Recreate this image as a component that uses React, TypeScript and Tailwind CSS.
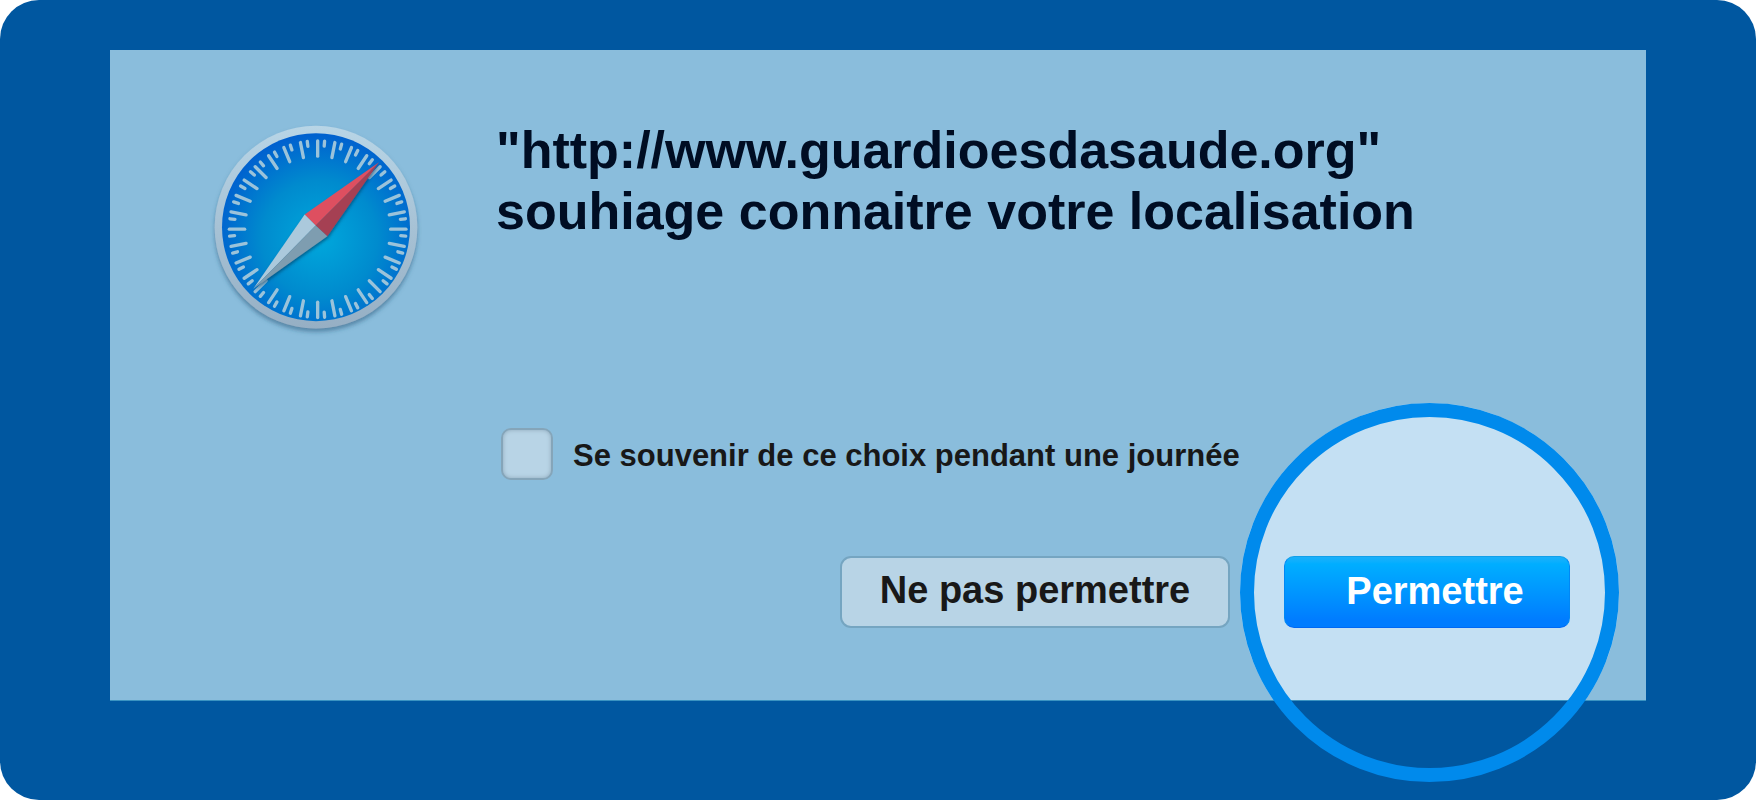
const STEP = 11.25;

function Compass() {
  const ticks = Array.from({ length: 32 }, (_, i) => -45 + i * STEP);
  return (
    <svg viewBox="30 30 636 656" className="h-[219px] w-[212px] shrink-0" role="img" aria-label="Safari">
      <defs>
        <linearGradient id="rim" x1="0" y1="0" x2="0" y2="1">
          <stop offset="0" stopColor="#b8d5e6" />
          <stop offset="1" stopColor="#96afc4" />
        </linearGradient>
        <radialGradient id="dial" cx="0.52" cy="0.56" r="0.56">
          <stop offset="0" stopColor="#00a8dc" />
          <stop offset="0.55" stopColor="#008bce" />
          <stop offset="1" stopColor="#0060cf" />
        </radialGradient>
        <filter id="drop" x="-10%" y="-10%" width="120%" height="125%">
          <feDropShadow dx="0" dy="10" stdDeviation="6" floodColor="#234f70" floodOpacity="0.5" />
        </filter>
        <filter id="needleDrop" x="-10%" y="-10%" width="125%" height="125%">
          <feDropShadow dx="2" dy="6" stdDeviation="5" floodColor="#00385f" floodOpacity="0.6" />
        </filter>
      </defs>
      <circle cx="348" cy="351" r="304" fill="url(#rim)" filter="url(#drop)" />
      <circle cx="348" cy="351" r="282" fill="url(#dial)" />
      <g stroke="#9bc3da" strokeLinecap="round" strokeWidth="10">
        {ticks.map((a, i) => (
          <g key={a}>
            <path d="M353 92V138" transform={`rotate(${a} 353 357)`} />
            <path d="M353 92V107" transform={`rotate(${i < 16 ? a + 4.5 : a + STEP - 4.5} 353 357)`} />
          </g>
        ))}
      </g>
      <g filter="url(#needleDrop)">
        <path d="M537 156L314 313L347 346Z" fill="#de4f60" />
        <path d="M537 156L382 378L347 346Z" fill="#a54052" />
        <path d="M160 536L314 313L347 346Z" fill="#abc9dc" />
        <path d="M160 536L382 378L347 346Z" fill="#7e9db0" />
      </g>
    </svg>
  );
}

export default function App() {
  return (
    <div className="bg-white">
      <main className="flex min-h-screen flex-col rounded-[39px] bg-[#0057a0] px-[110px] pt-[50px] pb-[99px] font-['Liberation_Sans',Arial,sans-serif] font-bold">
        <section className="relative flex grow items-start gap-[74px] border-b border-[#3a93c1] bg-[#8abddc] pt-[70px] pr-[76px] pb-[72px] pl-[100px]">
          <div className="pointer-events-none absolute inset-0 overflow-hidden">
            <div className="absolute right-[27px] -bottom-[82px] size-[379px] rounded-full bg-[#c4e0f3]" />
          </div>
          <div className="pointer-events-none absolute right-[27px] -bottom-[82px] size-[379px] rounded-full border-[14px] border-[#008aec]" />
          <Compass />
          <form className="relative grow" onSubmit={(e) => e.preventDefault()}>
            <h1 className="text-[52px] leading-[61px] text-[#000d23]">
              "http://www.guardioesdasaude.org"
              <br />
              souhiage connaitre votre localisation
            </h1>
            <div className="mt-[186px] flex items-center gap-5 pl-[5px]">
              <input
                id="remember"
                type="checkbox"
                className="size-[52px] appearance-none rounded-[10px] border-2 border-[#85a5b9] bg-[#b8d4e6] shadow-[inset_0_0_4px_#8fa9ba] checked:bg-[#008aec]"
              />
              <label htmlFor="remember" className="pt-1 text-[31px] leading-9 text-[#181818]">
                Se souvenir de ce choix pendant une journée
              </label>
            </div>
            <div className="mt-[76px] flex justify-end gap-[54px] text-[38px] leading-[44px]">
              <button
                type="button"
                className="h-[72px] w-[390px] rounded-[11px] border-2 border-[#75a5c1] bg-[#b8d4e6] pb-1 text-[#181818]"
              >
                Ne pas permettre
              </button>
              <button
                type="submit"
                className="h-[72px] w-[286px] rounded-[10px] border border-t-[#12a0ea] border-x-[#0088f5] border-b-[#0068f4] bg-linear-to-b from-[#1ab0fa] from-0% via-[#00aeff] via-10% to-[#007cff] to-90% pb-0.5 pl-4 text-white"
              >
                Permettre
              </button>
            </div>
          </form>
        </section>
      </main>
    </div>
  );
}
